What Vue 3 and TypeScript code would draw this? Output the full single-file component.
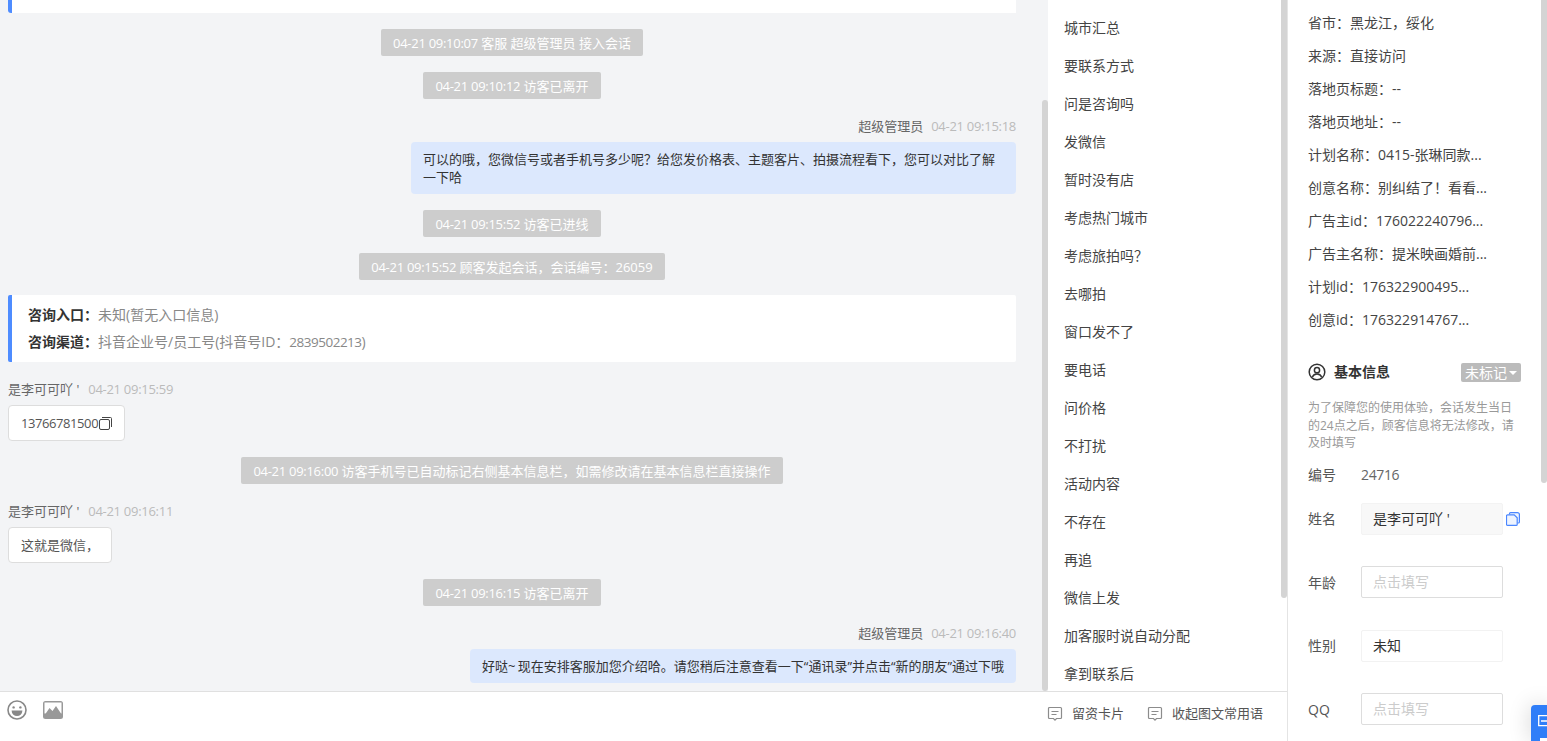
<script setup lang="ts">
type Row =
  | { kind: 'pill'; time: string; text: string }
  | { kind: 'me'; name: string; time: string; lead?: string; tilde?: string; text: string }
  | { kind: 'info'; entry: string; channel: string; channelId: string; tail: string }
  | { kind: 'guest'; name: string; time: string; text: string; copy?: boolean }

const guest = "是李可可吖 '"

const rows: Row[] = [
  { kind: 'pill', time: '04-21 09:10:07', text: '客服 超级管理员 接入会话' },
  { kind: 'pill', time: '04-21 09:10:12', text: '访客已离开' },
  { kind: 'me', name: '超级管理员', time: '04-21 09:15:18', text: '可以的哦，您微信号或者手机号多少呢？给您发价格表、主题客片、拍摄流程看下，您可以对比了解一下哈' },
  { kind: 'pill', time: '04-21 09:15:52', text: '访客已进线' },
  { kind: 'pill', time: '04-21 09:15:52', text: '顾客发起会话，会话编号：26059' },
  { kind: 'info', entry: '未知(暂无入口信息)', channel: '抖音企业号/员工号(抖音号ID：', channelId: '2839502213', tail: ')' },
  { kind: 'guest', name: guest, time: '04-21 09:15:59', text: '13766781500', copy: true },
  { kind: 'pill', time: '04-21 09:16:00', text: '访客手机号已自动标记右侧基本信息栏，如需修改请在基本信息栏直接操作' },
  { kind: 'guest', name: guest, time: '04-21 09:16:11', text: '这就是微信，' },
  { kind: 'pill', time: '04-21 09:16:15', text: '访客已离开' },
  { kind: 'me', name: '超级管理员', time: '04-21 09:16:40', lead: '好哒', tilde: '~', text: '现在安排客服加您介绍哈。请您稍后注意查看一下“通讯录”并点击“新的朋友”通过下哦' },
]

const phrases = ['城市汇总', '要联系方式', '问是咨询吗', '发微信', '暂时没有店', '考虑热门城市', '考虑旅拍吗？', '去哪拍', '窗口发不了', '要电话', '问价格', '不打扰', '活动内容', '不存在', '再追', '微信上发', '加客服时说自动分配', '拿到联系后']

const details = ['省市：黑龙江，绥化', '来源：直接访问', '落地页标题：--', '落地页地址：--', '计划名称：0415-张琳同款...', '创意名称：别纠结了！看看...', '广告主id：176022240796...', '广告主名称：提米映画婚前...', '计划id：176322900495...', '创意id：176322914767...']
</script>

<template>
  <div class="page">
    <div class="main">
      <div class="top">
        <section class="chat">
          <div class="card-stub"></div>
          <template v-for="(r, i) in rows" :key="i">
            <div v-if="r.kind === 'pill'" class="pill-row"><span class="pill"><span class="stamp">{{ r.time }}</span> {{ r.text }}</span></div>
            <div v-else-if="r.kind === 'me'" class="msg me">
              <div class="meta"><span class="who">{{ r.name }}</span><span class="time stamp">{{ r.time }}</span></div>
              <div class="bubble blue">{{ r.lead }}<span v-if="r.tilde" class="tilde">{{ r.tilde }}</span>{{ r.text }}</div>
            </div>
            <div v-else-if="r.kind === 'info'" class="info">
              <p><b>咨询入口：</b>{{ r.entry }}</p>
              <p><b>咨询渠道：</b>{{ r.channel }}<span class="id">{{ r.channelId }}</span>{{ r.tail }}</p>
            </div>
            <div v-else class="msg guest">
              <div class="meta"><span class="who">{{ r.name }}</span><span class="time stamp">{{ r.time }}</span></div>
              <div class="bubble white">
                <span :class="{ phone: r.copy }">{{ r.text }}</span>
                <svg v-if="r.copy" class="copy" viewBox="0 0 13 13" width="13" height="13" fill="none" stroke="#444" stroke-width="1">
                  <rect x="0.5" y="2.5" width="10" height="10" rx="1.5" />
                  <path d="M3 .5h8.500a1 1 0 0 1 1 1V10" />
                </svg>
              </div>
            </div>
          </template>
          <i class="bar chat-bar"></i>
        </section>
        <aside class="phrases">
          <div v-for="p in phrases" :key="p" class="phrase">{{ p }}</div>
          <i class="bar phrase-bar"></i>
        </aside>
      </div>
      <footer class="tools">
        <svg class="tool" viewBox="0 0 20 20" width="20" height="20" fill="none">
          <circle cx="10" cy="10" r="9" stroke="#888" stroke-width="1.6" />
          <circle cx="6.6" cy="7.4" r="1.2" fill="#888" />
          <circle cx="13.4" cy="7.4" r="1.2" fill="#888" />
          <path d="M4.600 10.600h10.800a5.400 5.400 0 0 1-10.800 0z" fill="#888" />
        </svg>
        <svg class="tool second" viewBox="0 0 20 18" width="20" height="18">
          <rect x="0" y="0" width="20" height="18" rx="2.500" fill="#999" />
          <rect x="1.500" y="1.500" width="17" height="11" fill="#fff" />
          <path d="M1 15 L6.500 7 L9.500 10 L13 5 L19 14 V17 H1 Z" fill="#999" />
        </svg>
        <span class="spacer"></span>
        <span class="action">
          <svg viewBox="0 0 16 16" width="16" height="16" fill="none" stroke="#8c8c8c" stroke-width="1.200"><path d="M2.500 1.500h11a1 1 0 0 1 1 1v9a1 1 0 0 1-1 1H9.500L8 14.200 6.500 12.500h-4a1 1 0 0 1-1-1v-9a1 1 0 0 1 1-1z" /><path d="M4.500 5.500h7M4.500 8.500h5" /></svg>
          留资卡片
        </span>
        <span class="action last">
          <svg viewBox="0 0 16 16" width="16" height="16" fill="none" stroke="#8c8c8c" stroke-width="1.200"><path d="M2.500 1.500h11a1 1 0 0 1 1 1v9a1 1 0 0 1-1 1H9.500L8 14.200 6.500 12.500h-4a1 1 0 0 1-1-1v-9a1 1 0 0 1 1-1z" /><path d="M4.500 5.500h7M4.500 8.500h5" /></svg>
          收起图文常用语
        </span>
      </footer>
    </div>
    <aside class="panel">
      <div v-for="d in details" :key="d" class="detail">{{ d }}</div>
      <div class="head">
        <svg viewBox="0 0 18 18" width="18" height="18" fill="none" stroke="#333" stroke-width="1.500">
          <circle cx="9" cy="9" r="7.800" />
          <circle cx="9" cy="7.200" r="2.600" />
          <path d="M4.400 14c.8-2 2.500-3 4.600-3s3.800 1 4.600 3" />
        </svg>
        <strong>基本信息</strong>
        <span class="tag">未标记<i class="caret"></i></span>
      </div>
      <p class="desc">为了保障您的使用体验，会话发生当日的24点之后，顾客信息将无法修改，请及时填写</p>
      <div class="field code"><label>编号</label><span class="code-val">24716</span></div>
      <div class="field first"><label>姓名</label><div class="input filled">{{ guest }}</div>
        <svg class="note" viewBox="0 0 14 14" width="14" height="14" fill="#eef4ff" stroke="#4a86ff" stroke-width="1.200">
          <path d="M3.500 2.500V1.600a1 1 0 0 1 1-1h6.900a2 2 0 0 1 2 2v7.400a1 1 0 0 1-1 1h-.9" />
          <path d="M1.500 2.800h6.700l3 3v6.600a1 1 0 0 1-1 1H1.500a1 1 0 0 1-1-1V3.800a1 1 0 0 1 1-1z" />
        </svg>
      </div>
      <div class="field"><label>年龄</label><div class="input empty">点击填写</div></div>
      <div class="field"><label>性别</label><div class="input soft">未知</div></div>
      <div class="field"><label>QQ</label><div class="input empty">点击填写</div></div>
      <i class="bar panel-bar"></i>
      <div class="float">
        <svg class="float-top" viewBox="0 0 14 12" width="14" height="12" fill="none" stroke="#fff" stroke-width="1.300"><path d="M.7.700h13v10H.7z" /><path d="M3 6h6" /></svg>
        <i class="float-mark"></i>
      </div>
    </aside>
  </div>
</template>

<style>
html, body { margin: 0; height: 100%; overflow: hidden; }
</style>

<style scoped>
.page {
  display: flex;
  width: 1547px;
  height: 741px;
  overflow: hidden;
  background: #fff;
  color: #333;
  font: 13px/19px "Open Sans", "Noto Sans CJK SC", sans-serif;
}
.main { width: 1288px; flex: none; display: flex; flex-direction: column; box-sizing: border-box; border-right: 1px solid #e4e4e4; }
.top { height: 691px; flex: none; display: flex; overflow: hidden; }
.chat { position: relative; width: 1048px; flex: none; box-sizing: border-box; padding-right: 32px; padding-left: 8px; background: #f3f4f6; overflow: hidden; }
.card-stub { height: 13px; background: #fff; border-left: 4px solid #4e8cff; border-bottom-left-radius: 3px; box-sizing: border-box; }
.stamp { letter-spacing: -0.28px; }
.phone { letter-spacing: -0.42px; }
.id { font-size: 13.500px; letter-spacing: -0.5px; line-height: 1; }
.tilde { letter-spacing: 2.5px; }
.pill-row { display: flex; justify-content: center; margin-top: 16px; }
.pill { height: 27px; line-height: 28px; padding: 0 12px; background: #cdcdcd; color: #fff; border-radius: 2px; white-space: pre-wrap; }
.msg { margin-top: 16px; display: flex; flex-direction: column; align-items: flex-start; }
.msg.me { align-items: flex-end; }
.meta { height: 19px; line-height: 23px; margin-bottom: 8px; white-space: nowrap; }
.who { color: #666; white-space: pre; }
.time { color: #bbb; margin-left: 8px; }
.guest .time { margin-left: 9px; }
.bubble { box-sizing: border-box; border-radius: 4px; padding: 8px 12px; max-width: 605px; line-height: 18px; }
.blue { background: #dce8fd; }
.white { background: #fff; border: 1px solid #ddd; color: #555; display: flex; align-items: center; }
.copy { flex: none; margin-left: 1px; }
.info { margin-top: 15px; background: #fff; border-left: 4px solid #4e8cff; border-radius: 2px; padding: 6px 16px 7px; color: #888; font-size: 14px; }
.info p { margin: 0; height: 27px; line-height: 27px; }
.info b { color: #333; font-weight: 700; }
.bar { position: absolute; right: 0; width: 6px; background: #d4d4d4; border-radius: 3px; }
.chat-bar { top: 100px; bottom: 0; }
.phrases { position: relative; flex: 1; box-sizing: border-box; padding: 9px 0 0 16px; overflow: hidden; font-size: 14px; }
.phrase { height: 38px; line-height: 38px; color: #444; }
.phrase-bar { top: -4px; height: 602px; }
.tools { flex: 1; display: flex; align-items: flex-start; border-top: 1px solid #e0e0e0; padding: 8px 24px 0 7px; }
.tool { flex: none; }
.second { margin-left: 16px; margin-top: 1px; }
.spacer { flex: 1; }
.action { display: flex; align-items: center; gap: 9px; margin: 4px 0 0 23px; color: #555; }
.panel { position: relative; flex: 1; box-sizing: border-box; padding: 6px 26px 0 20px; overflow: hidden; font-size: 14px; }
.detail { height: 33px; line-height: 33px; color: #444; white-space: nowrap; }
.head { display: flex; align-items: center; gap: 8px; margin-top: 26px; height: 19px; }
.head strong { flex: 1; font-weight: 700; }
.tag { display: flex; align-items: center; gap: 2px; height: 19px; margin-top: 2px; padding: 0 4px; background: #bbb; color: #fff; border-radius: 2px; }
.caret { width: 0; height: 0; border: 4px solid transparent; border-top-color: #fff; border-bottom: 0; }
.desc { margin: 18px 0 0; font-size: 12px; line-height: 17.500px; color: #999; }
.field { display: flex; align-items: center; height: 32px; margin-top: 31.500px; color: #555; }
.field.code { height: 19px; margin-top: 13px; }
.field.first { margin-top: 19px; }
.field label { width: 53px; flex: none; }
.code-val { color: #666; letter-spacing: -0.35px; }
.input { box-sizing: border-box; width: 142px; height: 32px; line-height: 30px; padding: 0 11px; border-radius: 2px; border: 1px solid #ddd; white-space: pre; }
.filled { background: #f8f8f8; border-color: #f3f3f3; color: #333; }
.soft { border-color: #f2f2f2; color: #333; }
.empty { color: #ccc; }
.note { margin-left: 3px; }
.panel-bar { top: -4px; height: 487px; }
.float { position: absolute; right: 0; top: 705px; width: 16px; height: 36px; background: #2f7ef8; border-radius: 4px 0 0 0; box-shadow: 0 0 22px rgba(0,0,0,.18); overflow: hidden; }
.float-top { position: absolute; left: 7px; top: 10px; }
.float-mark { position: absolute; left: 9px; top: 33px; width: 7px; height: 3px; background: #fff; }
</style>
